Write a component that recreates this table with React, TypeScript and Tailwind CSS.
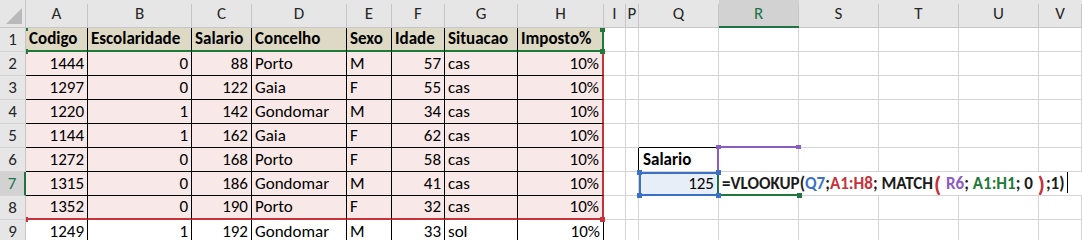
import React from "react";

type Val = string | number;

const COLS = ["A", "B", "C", "D", "E", "F", "G", "H", "I", "P", "Q", "R", "S", "T", "U", "V"];

const HEAD: Val[] = ["Codigo", "Escolaridade", "Salario", "Concelho", "Sexo", "Idade", "Situacao", "Imposto%"];

const DATA: Val[][] = [
  [1444, 0, 88, "Porto", "M", 57, "cas", "10%"],
  [1297, 0, 122, "Gaia", "F", 55, "cas", "10%"],
  [1220, 1, 142, "Gondomar", "M", 34, "cas", "10%"],
  [1144, 1, 162, "Gaia", "F", 62, "cas", "10%"],
  [1272, 0, 168, "Porto", "F", 58, "cas", "10%"],
  [1315, 0, 186, "Gondomar", "M", 41, "cas", "10%"],
  [1352, 0, 190, "Porto", "F", 32, "cas", "10%"],
  [1249, 1, 192, "Gondomar", "M", 33, "sol", "10%"],
];

// border presets (right / bottom edges of a cell)
const R_BLACK = "border-r border-r-black";
const R_GRID = "border-r border-r-[#d4d4d4]";
const R_GREEN = "border-r-2 border-r-[#1f7a3a]";
const R_RED = "border-r-2 border-r-[#c8323b]";
const R_PURPLE = "border-r-2 border-r-[#8b5cc2]";
const B_BLACK = "border-b border-b-black";
const B_GRID = "border-b border-b-[#d4d4d4]";
const B_GREEN = "border-b-2 border-b-[#1f7a3a]";
const B_RED = "border-b-2 border-b-[#c8323b]";
const B_PURPLE = "border-b-2 border-b-[#8b5cc2]";

const isRight = (v: Val) => typeof v === "number" || /%$/.test(String(v));

// small square drawn on a corner of a highlighted range
function Handle({ className }: { className: string }) {
  return <span className={"absolute z-10 " + className} />;
}

function ColHeader({ label, active }: { label: string; active?: boolean }) {
  return (
    <div
      className={
        "flex " +
        (active ? "bg-[#d2d2d2] border-b-2 border-b-[#217346]" : "bg-[#e6e6e6] border-b border-b-[#c6c6c6]")
      }
    >
      <div
        className={
          "flex-1 flex items-center justify-center pt-[1px] text-[17px] " +
          (active ? "text-[#217346]" : "text-[#262626]")
        }
      >
        {label}
      </div>
      <div className="w-px mt-[4px] bg-[#c6c6c6]" />
    </div>
  );
}

function RowHeader({ n, active }: { n: number; active?: boolean }) {
  return (
    <div
      className={
        "flex items-end justify-center pb-[1px] leading-[20px] text-[17px] border-b border-b-[#d4d4d4] " +
        (active
          ? "bg-[#d2d2d2] text-[#217346] border-r-2 border-r-[#217346]"
          : "bg-[#e6e6e6] text-[#262626] border-r border-r-[#c6c6c6]")
      }
    >
      {n}
    </div>
  );
}

function DataCell({
  v,
  bold,
  bg,
  right,
  bottom,
  children,
}: {
  v: Val;
  bold?: boolean;
  bg: string;
  right: string;
  bottom: string;
  children?: React.ReactNode;
}) {
  return (
    <div
      className={
        "relative flex items-end whitespace-nowrap px-[3px] pb-[1px] leading-[20px] text-[17px] text-black " +
        [bg, right, bottom].join(" ") +
        (isRight(v) && !bold ? " justify-end" : " justify-start") +
        (bold ? " font-bold" : "")
      }
    >
      {v}
      {children}
    </div>
  );
}

function Blank({ right = R_GRID, bottom = B_GRID, children }: { right?: string; bottom?: string; children?: React.ReactNode }) {
  return <div className={"relative " + right + " " + bottom}>{children}</div>;
}

function Formula() {
  return (
    <div className="relative flex items-end border-b-2 border-b-[#1f7a3a] pl-[3px] pb-0 leading-[20px] text-[17px] font-bold text-[#1c1c1c] whitespace-nowrap">
      <span>=VLOOKUP(</span>
      <span className="text-[#3b70c6]">Q7</span>
      <span>;</span>
      <span className="text-[#c8323b]">A1:H8</span>
      <span>;&nbsp;MATCH</span>
      <span className="text-[#c8323b] text-[23px] leading-[20px] px-[1px]">(</span>
      <span>&nbsp;</span>
      <span className="text-[#8b5cc2]">R6</span>
      <span>;&nbsp;</span>
      <span className="text-[#1f7a3a]">A1:H1</span>
      <span>;&nbsp;0&nbsp;</span>
      <span className="text-[#c8323b] text-[23px] leading-[20px] px-[1px]">)</span>
      <span>;1)</span>
      <span className="ml-[2px] mb-[1px] shrink-0 w-px h-[21px] bg-black" />
      <Handle className="-right-[3px] -bottom-[4px] w-[5px] h-[5px] bg-[#217346]" />
    </div>
  );
}

function SheetRow({ r }: { r: number }) {
  const cells: React.ReactNode[] = [];
  cells.push(<RowHeader key="h" n={r} active={r === 7} />);

  const vals = r === 1 ? HEAD : DATA[r - 2];
  const bg = r === 1 ? "bg-[#ddd9c4]" : r <= 8 ? "bg-[#f9e8e8]" : "bg-white";

  vals.forEach((v, i) => {
    const last = i === 7;
    let right = R_BLACK;
    let bottom = B_BLACK;
    if (r === 1) {
      bottom = B_GREEN;
      if (last) right = R_GREEN;
    } else if (r <= 8 && last) {
      right = R_RED;
    }
    if (r === 8) bottom = B_RED;

    let marks: React.ReactNode = null;
    if (r === 1 && i === 0)
      marks = (
        <>
          <Handle className="left-0 top-0 w-[2px] h-[3px] bg-[#1f7a3a]" />
          <Handle className="left-0 -bottom-[4px] w-[2px] h-[5px] bg-[#1f7a3a]" />
        </>
      );
    if (r === 1 && last)
      marks = (
        <>
          <Handle className="-right-[3px] top-0 w-[5px] h-[4px] bg-[#1f7a3a]" />
          <Handle className="-right-[3px] -bottom-[4px] w-[5px] h-[5px] bg-[#1f7a3a]" />
        </>
      );
    if (r === 8 && i === 0) marks = <Handle className="left-0 -bottom-[4px] w-[2px] h-[5px] bg-[#c8323b]" />;
    if (r === 8 && last) marks = <Handle className="-right-[3px] -bottom-[4px] w-[5px] h-[5px] bg-[#c8323b]" />;

    cells.push(
      <DataCell key={i} v={v} bold={r === 1} bg={bg} right={right} bottom={bottom}>
        {marks}
      </DataCell>
    );
  });

  // columns I and P
  cells.push(<Blank key="I" />);
  cells.push(<Blank key="P" right={r === 6 ? R_BLACK : R_GRID} />);

  // column Q
  if (r === 6) {
    cells.push(
      <div
        key="Q"
        className={"flex items-end pl-[4px] pb-[1px] leading-[20px] text-[17px] font-bold text-black " + R_PURPLE + " " + B_GRID}
      >
        Salario
      </div>
    );
  } else if (r === 7) {
    cells.push(
      <div
        key="Q"
        className="relative flex items-end justify-end bg-[#e8eef8] border-2 border-[#3b70c6] border-r-[#217346] pr-[3px] pb-0 leading-[20px] text-[17px] text-black"
      >
        125
        <Handle className="-left-[4px] -top-[4px] w-[5px] h-[5px] bg-[#3b70c6]" />
        <Handle className="-left-[4px] -bottom-[4px] w-[5px] h-[5px] bg-[#3b70c6]" />
        <Handle className="-right-[4px] -top-[4px] w-[5px] h-[5px] bg-[#3b70c6]" />
        <Handle className="-right-[4px] -bottom-[4px] w-[5px] h-[5px] bg-[#3b70c6]" />
      </div>
    );
  } else {
    cells.push(<Blank key="Q" bottom={r === 5 ? B_BLACK : B_GRID} />);
  }

  // columns R..V
  if (r === 7) {
    cells.push(<Formula key="R" />);
    ["S", "T", "U", "V"].forEach((c) => cells.push(<Blank key={c} right="" />));
  } else if (r === 5) {
    cells.push(
      <Blank key="R" bottom={B_PURPLE}>
        <Handle className="-left-[3px] -bottom-[3px] w-[5px] h-[4px] bg-[#8b5cc2]" />
        <Handle className="-right-[3px] -bottom-[3px] w-[5px] h-[4px] bg-[#8b5cc2]" />
      </Blank>
    );
    ["S", "T", "U", "V"].forEach((c) => cells.push(<Blank key={c} />));
  } else {
    ["R", "S", "T", "U", "V"].forEach((c) => cells.push(<Blank key={c} />));
  }
  return <>{cells}</>;
}

export default function App() {
  return (
    <div className="w-[1082px] h-[240px] overflow-hidden bg-white font-[Carlito,Calibri,Lato,sans-serif] select-none">
      <div className="grid grid-cols-[26px_62px_104px_60px_95px_45px_53px_73px_86px_22px_13px_80px_80px_80px_80px_80px_1fr] grid-rows-[28px_repeat(9,24px)]">
        {/* select-all corner */}
        <div className="flex items-end justify-end bg-[#e6e6e6] border-r border-b border-[#c6c6c6] pr-[3px] pb-[3px]">
          <svg width="16" height="16" viewBox="0 0 16 16">
            <polygon points="16,0 16,16 0,16" fill="#b9b9b9" />
          </svg>
        </div>
        {COLS.map((c) => (
          <ColHeader key={c} label={c} active={c === "R"} />
        ))}
        {[1, 2, 3, 4, 5, 6, 7, 8, 9].map((r) => (
          <SheetRow key={r} r={r} />
        ))}
      </div>
    </div>
  );
}
